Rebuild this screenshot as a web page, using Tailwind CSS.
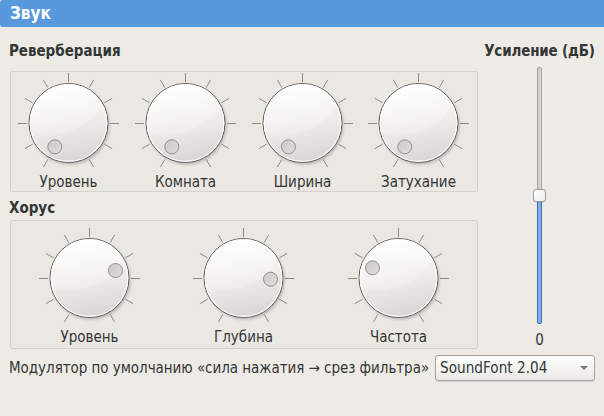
<!DOCTYPE html>
<html lang="ru">
<head>
<meta charset="utf-8">
<title>Звук</title>
<script src="https://cdn.jsdelivr.net/npm/@tailwindcss/browser@4"></script>
</head>
<body class="h-[416px] w-[604px] overflow-hidden bg-[#eeebe6] font-['DejaVu_Sans_Condensed','DejaVu_Sans','Noto_Sans',sans-serif] text-[15px] leading-5 whitespace-nowrap text-[#333635] [font-stretch:condensed]">
<svg class="absolute size-0" aria-hidden="true">
  <defs>
    <linearGradient id="face" x1=".4" y1="0" x2=".6" y2="1"><stop offset="0" stop-color="#fefefe"/><stop offset=".5" stop-color="#efedeb"/><stop offset="1" stop-color="#d8d4d1"/></linearGradient>
    <linearGradient id="gloss" x1="0" y1="0" x2="0" y2="1"><stop offset="0" stop-color="#fff" stop-opacity=".5"/><stop offset="1" stop-color="#fff" stop-opacity=".16"/></linearGradient>
    <linearGradient id="dot" x1="0" y1="0" x2="1" y2="1"><stop offset="0" stop-color="#cbc8c6"/><stop offset="1" stop-color="#e0dddb"/></linearGradient>
    <filter id="soft" x="-20%" y="-20%" width="140%" height="140%"><feGaussianBlur stdDeviation="1.6"/></filter>
    <clipPath id="disc"><circle cx="51.5" cy="51" r="38.500"/></clipPath>
    <g id="knob">
      <g stroke="#8b8987" stroke-width="1">
        <path d="M51.5 1v9M1 51.5h9M93 51.5h9"/>
        <path d="M26.3 7.8l4.5 7.8M76.7 7.8l-4.5 7.8M7.8 26.3l7.8 4.5M95.2 26.3l-7.8 4.5M7.8 76.7l7.8-4.5M95.2 76.7l-7.8-4.5M26.3 95.2l4.5-7.8M76.7 95.2l-4.5-7.8"/>
      </g>
      <circle cx="53" cy="53" r="39.500" fill="#000" opacity=".22" filter="url(#soft)"/>
      <circle cx="51.5" cy="51" r="39.500" fill="url(#face)" stroke="#5c5a59"/>
      <path clip-path="url(#disc)" d="M5 0H98Q88 38 68 52Q42 70 5 59Z" fill="url(#gloss)"/>
      <circle cx="51.5" cy="51" r="38.300" fill="none" stroke="#fff" stroke-width="1.2" opacity=".9"/>
    </g>
    <circle id="mark" r="7" fill="url(#dot)" stroke="#91908e"/>
  </defs>
</svg>
<header class="h-[27px] rounded-l-[3px] bg-[#5899de] pl-[10px] text-[17px] leading-[27px] font-bold text-white">Звук</header>
<main>
  <div class="flex h-[321px]">
    <div class="w-[475px] pl-[10px]">
      <h2 class="-ml-px pt-[14px] pb-[10px] tracking-[-0.03px] leading-5 font-bold">Реверберация</h2>
      <section class="flex h-[121px] w-[468px] rounded-[2px] border border-[#d5d2ce] bg-[#ebe8e4]">
        <div class="-ml-px flex w-[117px] flex-col items-center"><svg class="h-[100px] w-[103px] shrink-0 overflow-visible" viewBox="0 0 103 100"><use href="#knob"/><use href="#mark" x="37.8" y="74.8"/></svg><span>Уровень</span></div>
        <div class="flex w-[117px] flex-col items-center"><svg class="h-[100px] w-[103px] shrink-0 overflow-visible" viewBox="0 0 103 100"><use href="#knob"/><use href="#mark" x="37.8" y="74.8"/></svg><span>Комната</span></div>
        <div class="flex w-[117px] flex-col items-center"><svg class="h-[100px] w-[103px] shrink-0 overflow-visible" viewBox="0 0 103 100"><use href="#knob"/><use href="#mark" x="37.4" y="74.8"/></svg><span>Ширина</span></div>
        <div class="flex w-[115px] flex-col items-center"><svg class="h-[100px] w-[103px] shrink-0 overflow-visible" viewBox="0 0 103 100"><use href="#knob"/><use href="#mark" x="37.8" y="74.8"/></svg><span>Затухание</span></div>
      </section>
      <h2 class="-ml-px pt-[6px] pb-[2px] leading-5 font-bold">Хорус</h2>
      <section class="flex h-[129px] w-[468px] rounded-[2px] border border-[#d5d2ce] bg-[#ebe8e4] pt-[6px] pl-px">
        <div class="flex w-[155px] flex-col items-center"><svg class="h-[100px] w-[103px] shrink-0 overflow-visible" viewBox="0 0 103 100"><use href="#knob"/><use href="#mark" x="77.5" y="43.5"/></svg><span>Уровень</span></div>
        <div class="flex w-[153px] flex-col items-center"><svg class="h-[100px] w-[103px] shrink-0 overflow-visible" viewBox="0 0 103 100"><use href="#knob"/><use href="#mark" x="78.5" y="52.2"/></svg><span>Глубина</span></div>
        <div class="flex w-[157px] flex-col items-center"><svg class="h-[100px] w-[103px] shrink-0 overflow-visible" viewBox="0 0 103 100"><use href="#knob"/><use href="#mark" x="25.5" y="40.8"/></svg><span>Частота</span></div>
      </section>
    </div>
    <div class="flex w-[129px] flex-col items-center pt-[14px]">
      <h2 class="tracking-[-0.18px] leading-5 font-bold">Усиление (дБ)</h2>
      <svg class="mt-[4px] h-[262px] w-[129px] shrink-0" viewBox="475 65 129 262">
        <defs>
          <linearGradient id="groove"><stop offset="0" stop-color="#c9c6c3"/><stop offset="1" stop-color="#dedbd8"/></linearGradient>
          <linearGradient id="handle" x1="0" y1="0" x2="1" y2="1"><stop offset="0" stop-color="#fff"/><stop offset="1" stop-color="#efedec"/></linearGradient>
        </defs>
        <rect x="537.5" y="67.5" width="4" height="256" rx="1.5" fill="url(#groove)" stroke="#a5a29f"/>
        <path d="M537.5 196V322a1.500 1.500 0 0 0 1.500 1.500h1a1.500 1.500 0 0 0 1.500-1.500V196Z" fill="#76b2f5" stroke="#456fa3"/>
        <rect x="533" y="189.500" width="13" height="13" rx="3" fill="#000" opacity=".12"/>
        <rect x="533.5" y="189.500" width="12" height="12" rx="2.500" fill="url(#handle)" stroke="#9c9996"/>
      </svg>
      <span class="mt-[3px]">0</span>
    </div>
  </div>
  <div class="flex h-[40px] items-center justify-between pr-[9px] pl-[9px]">
    <label class="tracking-[-0.04px]">Модулятор по умолчанию «сила нажатия → срез фильтра»</label>
    <div class="flex h-[26px] w-[160px] items-center justify-between rounded-[3px] border border-[#a5a29f] bg-linear-to-b from-[#fefefe] to-[#ebe8e6] pr-[6px] pl-[4px] shadow-[0_1px_1px_#0000001a]">
      <span class="text-[15.2px]">SoundFont 2.04</span>
      <svg class="h-[4px] w-[8px]" viewBox="0 0 8 4"><path d="M0 0h8L4 4Z" fill="#777573"/></svg>
    </div>
  </div>
</main>
</body>
</html>
